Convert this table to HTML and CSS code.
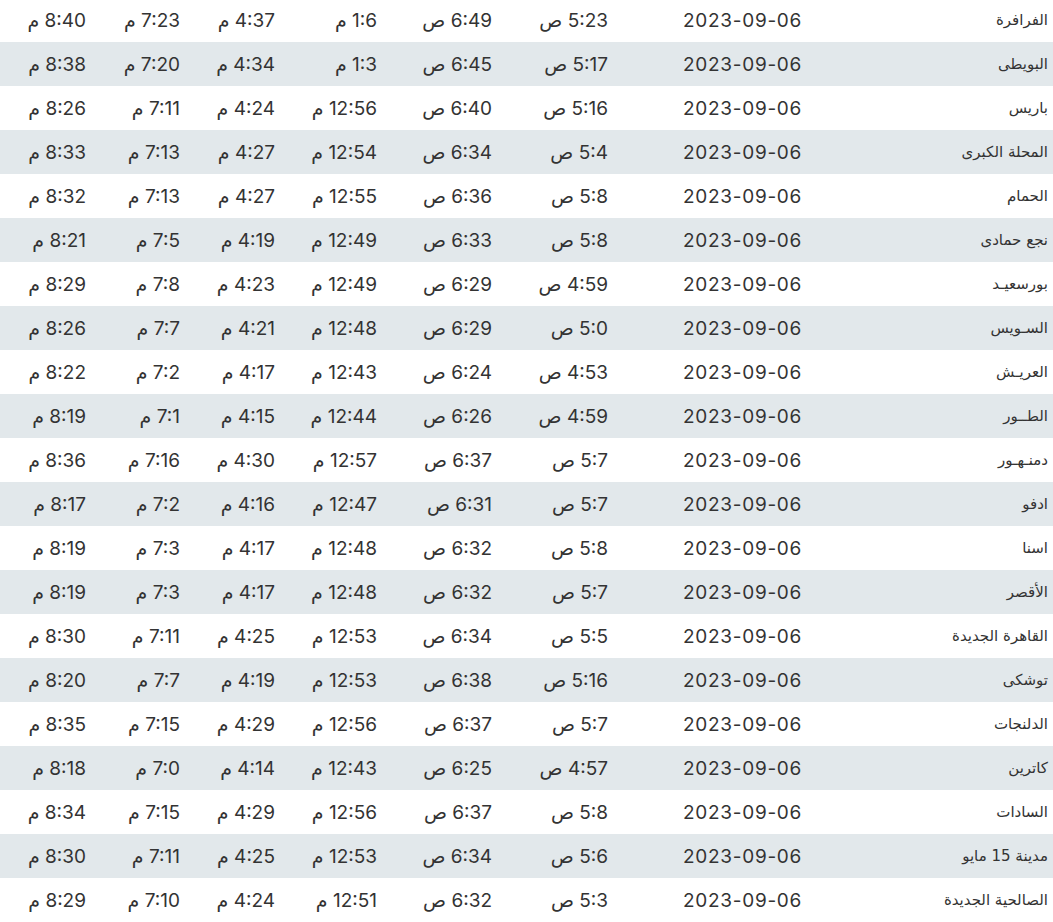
FILE: index.html
```html
<!DOCTYPE html>
<html lang="ar" dir="rtl">
  <head>
    <meta charset="utf-8">
    <title>مواقيت الصلاة</title>
    <link rel="stylesheet" href="styles.css">
  </head>
  <body>
    <table class="times">
      <colgroup>
        <col class="c-city">
        <col class="c-date">
        <col class="c-fajr">
        <col class="c-sunrise">
        <col class="c-dhuhr">
        <col class="c-asr">
        <col class="c-maghrib">
        <col class="c-isha">
      </colgroup>
      <tbody>
        <tr><td class="city">الفرافرة</td><td class="date">2023-09-06</td><td>5:23 ص</td><td>6:49 ص</td><td>1:6 م</td><td>4:37 م</td><td>7:23 م</td><td>8:40 م</td></tr>
        <tr><td class="city">البويطى</td><td class="date">2023-09-06</td><td>5:17 ص</td><td>6:45 ص</td><td>1:3 م</td><td>4:34 م</td><td>7:20 م</td><td>8:38 م</td></tr>
        <tr><td class="city">باريس</td><td class="date">2023-09-06</td><td>5:16 ص</td><td>6:40 ص</td><td>12:56 م</td><td>4:24 م</td><td>7:11 م</td><td>8:26 م</td></tr>
        <tr><td class="city">المحلة الكبرى</td><td class="date">2023-09-06</td><td>5:4 ص</td><td>6:34 ص</td><td>12:54 م</td><td>4:27 م</td><td>7:13 م</td><td>8:33 م</td></tr>
        <tr><td class="city">الحمام</td><td class="date">2023-09-06</td><td>5:8 ص</td><td>6:36 ص</td><td>12:55 م</td><td>4:27 م</td><td>7:13 م</td><td>8:32 م</td></tr>
        <tr><td class="city">نجع حمادى</td><td class="date">2023-09-06</td><td>5:8 ص</td><td>6:33 ص</td><td>12:49 م</td><td>4:19 م</td><td>7:5 م</td><td>8:21 م</td></tr>
        <tr><td class="city">بورسعيـد</td><td class="date">2023-09-06</td><td>4:59 ص</td><td>6:29 ص</td><td>12:49 م</td><td>4:23 م</td><td>7:8 م</td><td>8:29 م</td></tr>
        <tr><td class="city">السـويس</td><td class="date">2023-09-06</td><td>5:0 ص</td><td>6:29 ص</td><td>12:48 م</td><td>4:21 م</td><td>7:7 م</td><td>8:26 م</td></tr>
        <tr><td class="city">العريـش</td><td class="date">2023-09-06</td><td>4:53 ص</td><td>6:24 ص</td><td>12:43 م</td><td>4:17 م</td><td>7:2 م</td><td>8:22 م</td></tr>
        <tr><td class="city">الطــور</td><td class="date">2023-09-06</td><td>4:59 ص</td><td>6:26 ص</td><td>12:44 م</td><td>4:15 م</td><td>7:1 م</td><td>8:19 م</td></tr>
        <tr><td class="city">دمنـهـور</td><td class="date">2023-09-06</td><td>5:7 ص</td><td>6:37 ص</td><td>12:57 م</td><td>4:30 م</td><td>7:16 م</td><td>8:36 م</td></tr>
        <tr><td class="city">ادفو</td><td class="date">2023-09-06</td><td>5:7 ص</td><td>6:31 ص</td><td>12:47 م</td><td>4:16 م</td><td>7:2 م</td><td>8:17 م</td></tr>
        <tr><td class="city">اسنا</td><td class="date">2023-09-06</td><td>5:8 ص</td><td>6:32 ص</td><td>12:48 م</td><td>4:17 م</td><td>7:3 م</td><td>8:19 م</td></tr>
        <tr><td class="city">الأقصر</td><td class="date">2023-09-06</td><td>5:7 ص</td><td>6:32 ص</td><td>12:48 م</td><td>4:17 م</td><td>7:3 م</td><td>8:19 م</td></tr>
        <tr><td class="city">القاهرة الجديدة</td><td class="date">2023-09-06</td><td>5:5 ص</td><td>6:34 ص</td><td>12:53 م</td><td>4:25 م</td><td>7:11 م</td><td>8:30 م</td></tr>
        <tr><td class="city">توشكى</td><td class="date">2023-09-06</td><td>5:16 ص</td><td>6:38 ص</td><td>12:53 م</td><td>4:19 م</td><td>7:7 م</td><td>8:20 م</td></tr>
        <tr><td class="city">الدلنجات</td><td class="date">2023-09-06</td><td>5:7 ص</td><td>6:37 ص</td><td>12:56 م</td><td>4:29 م</td><td>7:15 م</td><td>8:35 م</td></tr>
        <tr><td class="city">كاترين</td><td class="date">2023-09-06</td><td>4:57 ص</td><td>6:25 ص</td><td>12:43 م</td><td>4:14 م</td><td>7:0 م</td><td>8:18 م</td></tr>
        <tr><td class="city">السادات</td><td class="date">2023-09-06</td><td>5:8 ص</td><td>6:37 ص</td><td>12:56 م</td><td>4:29 م</td><td>7:15 م</td><td>8:34 م</td></tr>
        <tr><td class="city">مدينة 15 مايو</td><td class="date">2023-09-06</td><td>5:6 ص</td><td>6:34 ص</td><td>12:53 م</td><td>4:25 م</td><td>7:11 م</td><td>8:30 م</td></tr>
        <tr><td class="city">الصالحية الجديدة</td><td class="date">2023-09-06</td><td>5:3 ص</td><td>6:32 ص</td><td>12:51 م</td><td>4:24 م</td><td>7:10 م</td><td>8:29 م</td></tr>
      </tbody>
    </table>
  </body>
</html>
```

FILE: styles.css
```css
body {
    background: #fff;
    color: #333;
    margin: 0;
    overflow: hidden;
}
.times {
    border-collapse: collapse;
    font-family: Inter, "Noto Sans", "DejaVu Sans", sans-serif;
    font-size: 19px;
    margin-top: -2px;
    table-layout: fixed;
    width: 1053px;
}
.times td {
    height: 44px;
    padding: 0 5px 0 0;
    text-align: right;
    vertical-align: middle;
    white-space: nowrap;
}
.times tr:nth-child(even) td {
    background-color: #e2e8eb;
}
.times td.city {
    font-family: "DejaVu Sans", "Noto Sans", sans-serif;
    font-size: 15px;
}
.times td.date {
    letter-spacing: 0.7px;
}
.c-city { width: 246px; }
.c-date { width: 194px; }
.c-fajr { width: 116px; }
.c-sunrise { width: 115px; }
.c-dhuhr { width: 102px; }
.c-asr { width: 95px; }
.c-maghrib { width: 94px; }
.c-isha { width: 91px; }
```
